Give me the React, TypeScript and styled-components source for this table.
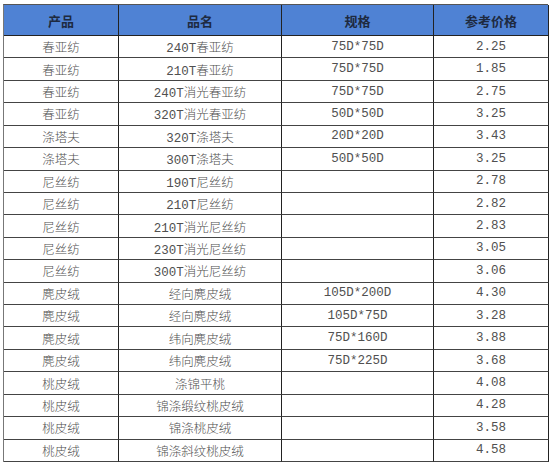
import React, {FC} from 'react';
import styled, {createGlobalStyle} from 'styled-components';

interface Item {
    kind: string
    name: string
    spec: string
    price: string
}

const items: Item[] = [
    {kind: '春亚纺', name: '240T春亚纺', spec: '75D*75D', price: '2.25'},
    {kind: '春亚纺', name: '210T春亚纺', spec: '75D*75D', price: '1.85'},
    {kind: '春亚纺', name: '240T消光春亚纺', spec: '75D*75D', price: '2.75'},
    {kind: '春亚纺', name: '320T消光春亚纺', spec: '50D*50D', price: '3.25'},
    {kind: '涤塔夫', name: '320T涤塔夫', spec: '20D*20D', price: '3.43'},
    {kind: '涤塔夫', name: '300T涤塔夫', spec: '50D*50D', price: '3.25'},
    {kind: '尼丝纺', name: '190T尼丝纺', spec: '', price: '2.78'},
    {kind: '尼丝纺', name: '210T尼丝纺', spec: '', price: '2.82'},
    {kind: '尼丝纺', name: '210T消光尼丝纺', spec: '', price: '2.83'},
    {kind: '尼丝纺', name: '230T消光尼丝纺', spec: '', price: '3.05'},
    {kind: '尼丝纺', name: '300T消光尼丝纺', spec: '', price: '3.06'},
    {kind: '麂皮绒', name: '经向麂皮绒', spec: '105D*200D', price: '4.30'},
    {kind: '麂皮绒', name: '经向麂皮绒', spec: '105D*75D', price: '3.28'},
    {kind: '麂皮绒', name: '纬向麂皮绒', spec: '75D*160D', price: '3.88'},
    {kind: '麂皮绒', name: '纬向麂皮绒', spec: '75D*225D', price: '3.68'},
    {kind: '桃皮绒', name: '涤锦平桃', spec: '', price: '4.08'},
    {kind: '桃皮绒', name: '锦涤缎纹桃皮绒', spec: '', price: '4.28'},
    {kind: '桃皮绒', name: '锦涤桃皮绒', spec: '', price: '3.58'},
    {kind: '桃皮绒', name: '锦涤斜纹桃皮绒', spec: '', price: '4.58'},
]

const App: FC = () => {
    return (
        <>
            <GlobalStyle/>
            <Page>
                <Table>
                    <Row>
                        <HeadCell>产品</HeadCell>
                        <HeadCell>品名</HeadCell>
                        <HeadCell>规格</HeadCell>
                        <HeadCell>参考价格</HeadCell>
                    </Row>
                    {items.map((item, i) => (
                        <Row key={i}>
                            <Cell>{item.kind}</Cell>
                            <Cell>{item.name}</Cell>
                            <Cell>{item.spec}</Cell>
                            <Cell>{item.price}</Cell>
                        </Row>
                    ))}
                </Table>
            </Page>
        </>
    );
};

export default App;


const GlobalStyle = createGlobalStyle`
  html, body {
    margin: 0;
    padding: 0;
    background: #fff;
  }
  * {
    box-sizing: border-box;
  }
`
const Page = styled.div`
  width: 553px;
  height: 465px;
  padding: 4px 0 0 3px;
  background: #fff;
`
const Table = styled.div`
  display: grid;
  grid-template-columns: 115px 163px 152px 115px;
  grid-template-rows: 31px repeat(19, 1fr);
  width: 545px;
  height: 458px;
  border-top: 1px solid #555;
  border-left: 1px solid #777;
`
const Row = styled.div`
  display: contents;
`
const HeadCell = styled.div`
  display: flex;
  align-items: center;
  justify-content: center;
  background: #4f82d4;
  border-right: 1px solid #222;
  border-bottom: 1px solid #222;
  font-family: "Noto Sans CJK SC", sans-serif;
  font-weight: bold;
  font-size: 13px;
  color: #1e2a40;
`
const Cell = styled.div`
  display: flex;
  align-items: center;
  justify-content: center;
  border-right: 1px solid #222;
  border-bottom: 1px solid #444;
  font-family: "Liberation Mono", "Noto Sans CJK SC", monospace;
  font-weight: 300;
  font-size: 12.5px;
  color: #505050;
  white-space: nowrap;
`
